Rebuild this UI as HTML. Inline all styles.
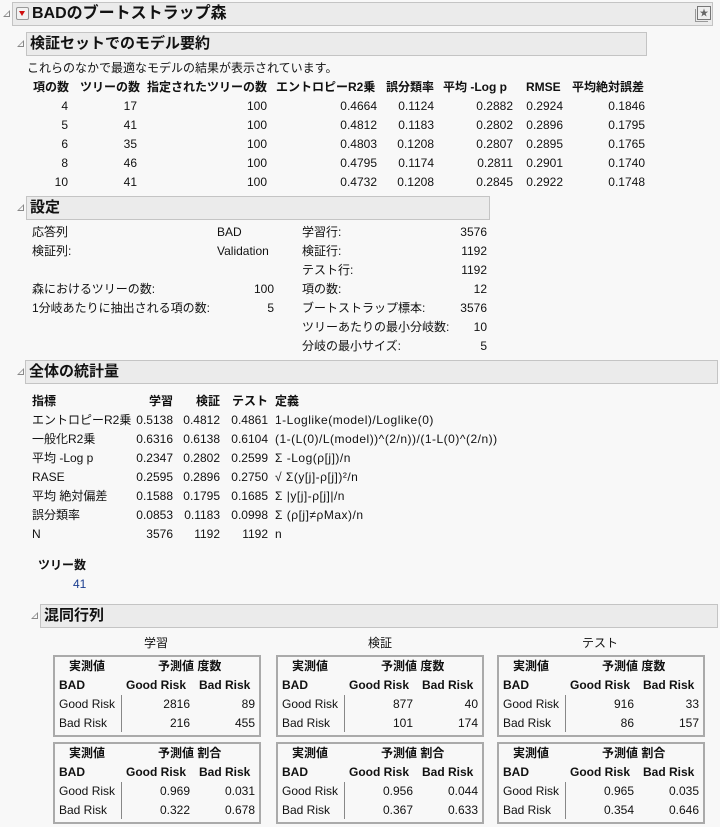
<!DOCTYPE html>
<html><head><meta charset="utf-8"><style>
body{margin:0;width:720px;height:827px;background:#f8f8f8;font-family:"Liberation Sans","Noto Sans CJK JP",sans-serif;font-size:12px;color:#111;position:relative;overflow:hidden}
.a{position:absolute;white-space:nowrap;line-height:14px}
.r{text-align:right}
.b{font-weight:bold}
.hd{position:absolute;background:#ebebeb;border:1px solid #c4c4c4;box-sizing:border-box}
.hd span{position:absolute;left:3px;top:2px;font-weight:bold;font-size:15px;line-height:18px}
.tri{position:absolute;width:0;height:0;border-left:7px solid transparent;border-bottom:7px solid #888}
.tri:after{content:"";position:absolute;left:-5px;top:2px;border-left:4px solid transparent;border-bottom:4px solid #f8f8f8}
.box{position:absolute;border:2px solid #aaa;box-sizing:border-box;background:#f8f8f8}
.vl{position:absolute;width:1px;background:#888}
.blue{color:#1a3d8f}
.ls{letter-spacing:0.5px}
</style></head><body>
<div class="tri" style="left:3px;top:10px"></div>
<div class="hd" style="left:12px;top:2px;width:701px;height:24px"><span style="left:19px;font-size:16px;top:2px">BADのブートストラップ森</span></div>
<div style="position:absolute;left:16px;top:7px;width:11px;height:11px;border:1px solid #999;border-radius:2px;background:#f2f2f2"><div style="position:absolute;left:2px;top:3px;border-left:3.5px solid transparent;border-right:3.5px solid transparent;border-top:5px solid #d01010"></div></div>
<div style="position:absolute;left:697px;top:6px;width:12px;height:12px;border:1px solid #777;background:#eee;font-size:9px;line-height:12px;text-align:center;color:#666">★</div>
<div style="position:absolute;left:695px;top:9px;border-left:1px solid #999;border-bottom:1px solid #999;width:12px;height:12px"></div>

<div class="tri" style="left:17px;top:40px"></div>
<div class="hd" style="left:26px;top:32px;width:621px;height:24px"><span>検証セットでのモデル要約</span></div>
<div class="a" style="left:27px;top:61px">これらのなかで最適なモデルの結果が表示されています。</div>
<div class="a b" style="left:33px;top:80px">項の数</div>
<div class="a b" style="left:80px;top:80px">ツリーの数</div>
<div class="a b" style="left:147px;top:80px">指定されたツリーの数</div>
<div class="a b" style="left:276px;top:80px">エントロピーR2乗</div>
<div class="a b" style="left:386px;top:80px">誤分類率</div>
<div class="a b" style="left:443px;top:80px">平均 -Log p</div>
<div class="a b" style="left:526px;top:80px">RMSE</div>
<div class="a b" style="left:572px;top:80px">平均絶対誤差</div>

<div class="tri" style="left:17px;top:204px"></div>
<div class="hd" style="left:26px;top:196px;width:464px;height:24px"><span>設定</span></div>
<div class="a" style="left:32px;top:225px">応答列</div><div class="a" style="left:217px;top:225px">BAD</div>
<div class="a" style="left:32px;top:244px">検証列:</div><div class="a" style="left:217px;top:244px">Validation</div>
<div class="a" style="left:32px;top:282px">森におけるツリーの数:</div><div class="a r" style="right:446px;top:282px">100</div>
<div class="a" style="left:32px;top:301px">1分岐あたりに抽出される項の数:</div><div class="a r" style="right:446px;top:301px">5</div>

<div class="tri" style="left:17px;top:368px"></div>
<div class="hd" style="left:25px;top:360px;width:693px;height:24px"><span>全体の統計量</span></div>
<div class="a b" style="left:32px;top:394px">指標</div>
<div class="a b r" style="right:547px;top:394px">学習</div>
<div class="a b r" style="right:500px;top:394px">検証</div>
<div class="a b r" style="right:452px;top:394px">テスト</div>
<div class="a b" style="left:275px;top:394px">定義</div>
<div class="a b" style="left:38px;top:558px">ツリー数</div>
<div class="a blue" style="left:73px;top:577px">41</div>

<div class="tri" style="left:31px;top:612px"></div>
<div class="hd" style="left:40px;top:604px;width:678px;height:24px"><span>混同行列</span></div>
<div class="a" style="left:144px;top:636px">学習</div>
<div class="a" style="left:368px;top:636px">検証</div>
<div class="a" style="left:582px;top:636px">テスト</div>
<script>
function A(x,y,t,cls,right){var d=document.createElement('div');d.className='a '+(cls||'');if(right){d.style.right=(720-x)+'px'}else d.style.left=x+'px';d.style.top=y+'px';d.textContent=t;document.body.appendChild(d);return d}
var rows=[[4,17,100,'0.4664','0.1124','0.2882','0.2924','0.1846'],[5,41,100,'0.4812','0.1183','0.2802','0.2896','0.1795'],[6,35,100,'0.4803','0.1208','0.2807','0.2895','0.1765'],[8,46,100,'0.4795','0.1174','0.2811','0.2901','0.1740'],[10,41,100,'0.4732','0.1208','0.2845','0.2922','0.1748']];
var rx=[68,137,267,377,434,513,563,645];
rows.forEach(function(r,i){r.forEach(function(v,j){A(rx[j],99+19*i,String(v),'r',true)})});
var s=[['学習行:','3576'],['検証行:','1192'],['テスト行:','1192'],['項の数:','12'],['ブートストラップ標本:','3576'],['ツリーあたりの最小分岐数:','10'],['分岐の最小サイズ:','5']];
s.forEach(function(r,i){A(302,225+19*i,r[0]);A(487,225+19*i,r[1],'r',true)});
var st=[['エントロピーR2乗','0.5138','0.4812','0.4861','1-Loglike(model)/Loglike(0)'],['一般化R2乗','0.6316','0.6138','0.6104','(1-(L(0)/L(model))^(2/n))/(1-L(0)^(2/n))'],['平均 -Log p','0.2347','0.2802','0.2599','Σ -Log(ρ[j])/n'],['RASE','0.2595','0.2896','0.2750','√ Σ(y[j]-ρ[j])²/n'],['平均 絶対偏差','0.1588','0.1795','0.1685','Σ |y[j]-ρ[j]|/n'],['誤分類率','0.0853','0.1183','0.0998','Σ (ρ[j]≠ρMax)/n'],['N','3576','1192','1192','n']];
st.forEach(function(r,i){var y=413+19*i;A(32,y,r[0]);A(173,y,r[1],'r',true);A(220,y,r[2],'r',true);A(268,y,r[3],'r',true);A(275,y,r[4],'ls')});
var bx=[53,276,497];
var cnt=[[['2816','89'],['216','455']],[['877','40'],['101','174']],[['916','33'],['86','157']]];
var pct=[[['0.969','0.031'],['0.322','0.678']],[['0.956','0.044'],['0.367','0.633']],[['0.965','0.035'],['0.354','0.646']]];
bx.forEach(function(x,k){[[655,cnt[k],'度数'],[742,pct[k],'割合']].forEach(function(g){var y=g[0];
var b=document.createElement('div');b.className='box';b.style.cssText='left:'+x+'px;top:'+y+'px;width:208px;height:82px';document.body.appendChild(b);
A(x+16,y+4,'実測値','b');A(x+105,y+4,'予測値 '+g[2],'b');
A(x+6,y+23,'BAD','b');A(x+73,y+23,'Good Risk','b');A(x+146,y+23,'Bad Risk','b');
A(x+6,y+42,'Good Risk');A(x+6,y+61,'Bad Risk');
A(x+137,y+42,g[1][0][0],'r',true);A(x+202,y+42,g[1][0][1],'r',true);
A(x+137,y+61,g[1][1][0],'r',true);A(x+202,y+61,g[1][1][1],'r',true);
var v=document.createElement('div');v.className='vl';v.style.cssText='left:'+(x+68)+'px;top:'+(y+40)+'px;height:37px';document.body.appendChild(v);
})});
</script>
</body></html>
